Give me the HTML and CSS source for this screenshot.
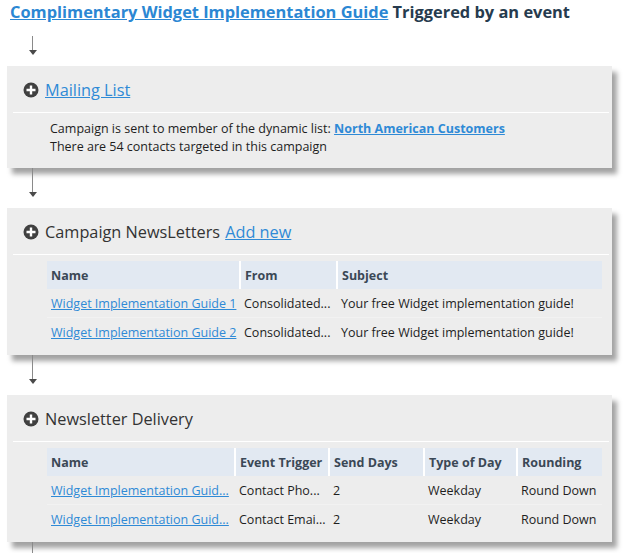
FILE: index.html
```html
<!DOCTYPE HTML>
<html>

<head>
    <meta charset="utf-8">
    <title>Campaign flow</title>
    <link rel="stylesheet" href="styles.css">
</head>

<body>
    <div class="flow">
        <h1 class="flow-title"><a href="#">Complimentary Widget Implementation Guide</a> Triggered by an event</h1>

        <div class="connector first"><span class="arrow"></span></div>

        <section class="step">
            <div class="step-head">
                <svg class="plus" width="16" height="16" viewBox="0 0 16 16"><circle cx="8" cy="8" r="7.5" fill="#404040"/><path d="M8 3.5v9M3.5 8h9" stroke="#fff" stroke-width="2.4"/></svg>
                <a href="#">Mailing List</a>
            </div>
            <div class="step-body text">
                <p>Campaign is sent to member of the dynamic list: <a class="strong" href="#">North American Customers</a></p>
                <p>There are 54 contacts targeted in this campaign</p>
            </div>
        </section>

        <div class="connector"><span class="arrow"></span></div>

        <section class="step">
            <div class="step-head">
                <svg class="plus" width="16" height="16" viewBox="0 0 16 16"><circle cx="8" cy="8" r="7.5" fill="#404040"/><path d="M8 3.5v9M3.5 8h9" stroke="#fff" stroke-width="2.4"/></svg>
                <span>Campaign NewsLetters</span> <a href="#">Add new</a>
            </div>
            <div class="step-body">
                <table class="grid news">
                    <thead>
                        <tr><th>Name</th><th>From</th><th>Subject</th></tr>
                    </thead>
                    <tbody>
                        <tr><td><a href="#">Widget Implementation Guide 1</a></td><td>Consolidated...</td><td>Your free Widget implementation guide!</td></tr>
                        <tr><td><a href="#">Widget Implementation Guide 2</a></td><td>Consolidated...</td><td>Your free Widget implementation guide!</td></tr>
                    </tbody>
                </table>
            </div>
        </section>

        <div class="connector"><span class="arrow"></span></div>

        <section class="step">
            <div class="step-head">
                <svg class="plus" width="16" height="16" viewBox="0 0 16 16"><circle cx="8" cy="8" r="7.5" fill="#404040"/><path d="M8 3.5v9M3.5 8h9" stroke="#fff" stroke-width="2.4"/></svg>
                <span>Newsletter Delivery</span>
            </div>
            <div class="step-body">
                <table class="grid delivery">
                    <thead>
                        <tr><th>Name</th><th>Event Trigger</th><th>Send Days</th><th>Type of Day</th><th>Rounding</th></tr>
                    </thead>
                    <tbody>
                        <tr><td><a href="#">Widget Implementation Guid...</a></td><td>Contact Pho...</td><td>2</td><td>Weekday</td><td>Round Down</td></tr>
                        <tr><td><a href="#">Widget Implementation Guid...</a></td><td>Contact Emai...</td><td>2</td><td>Weekday</td><td>Round Down</td></tr>
                    </tbody>
                </table>
            </div>
        </section>

        <div class="connector tail"></div>
    </div>
</body>

</html>
```

FILE: styles.css
```css
html, body {
	background: #ffffff;
	padding: 0;
	border: 0;
	margin: 0;
}

body {
    font-family: "Open Sans", "Noto Sans", sans-serif;
    color: #1e1e1e;
    overflow: hidden;
}

a {
    color: #2f8ad6;
}

.flow {
    padding: 0 11px 0 7px;
}

.flow-title {
    margin: 0;
    padding: 1px 0 0 3px;
    height: 23px;
    font-size: 16.4px;
    line-height: 22px;
    font-weight: 700;
    color: #263b4e;
    white-space: nowrap;
}

.flow-title a {
    color: #2b87d3;
}

/* arrows between the steps */
.connector {
    position: relative;
    height: 40px;
}
.connector.first {
    height: 42px;
}
.connector::before {
    content: "";
    position: absolute;
    left: 25px;
    top: 0;
    bottom: 16px;
    width: 1px;
    background: #8a8a8a;
}
.connector.first::before {
    top: 12px;
}
.connector .arrow {
    position: absolute;
    left: 22px;
    bottom: 11px;
    width: 0;
    height: 0;
    border-left: 4px solid transparent;
    border-right: 4px solid transparent;
    border-top: 5px solid #4a4a4a;
}
.connector.tail {
    height: 11px;
}
.connector.tail::before {
    bottom: 0;
}

/* step panels */
.step {
    position: relative;
    background: #ededed;
    box-shadow: 5px 6px 5px #a3a3a3;
    padding: 14px 3px 8px 6px;
}

.step-head {
    display: flex;
    align-items: center;
    gap: 5px;
    height: 20px;
    padding: 0 0 12px 10px;
    font-size: 16.3px;
    color: #333333;
    border-bottom: 1px solid #ffffff;
}

.plus {
    flex: none;
    margin-right: 1px;
}

.step-body {
    padding: 6px 7px 0 34px;
}

.text {
    padding-top: 7px;
    padding-bottom: 4px;
    padding-left: 37px;
    font-size: 12.5px;
    line-height: 18px;
}
.text p {
    margin: 0;
}
.text a.strong {
    font-weight: 700;
}

/* tables */
.grid {
    width: 100%;
    border-collapse: collapse;
    table-layout: fixed;
    font-size: 12.5px;
}
.grid th {
    background: #e2e9f2;
    color: #3b4856;
    text-align: left;
    font-weight: 700;
    height: 28px;
    padding: 0 4px;
    border-left: 2px solid #ffffff;
}
.grid th:first-child {
    border-left: 0;
}
.grid td {
    height: 28px;
    padding: 0 4px;
    white-space: nowrap;
    overflow: hidden;
    border-bottom: 1px solid #f2f2f2;
}
.grid tr:last-child td {
    border-bottom: 0;
    height: 29px;
}

.news th:nth-child(1) { width: 184px; }
.news th:nth-child(2) { width: 87px; }

.delivery th:nth-child(1) { width: 179px; }
.delivery th:nth-child(2) { width: 84px; }
.delivery th:nth-child(3) { width: 85px; }
.delivery th:nth-child(4) { width: 83px; }
```
